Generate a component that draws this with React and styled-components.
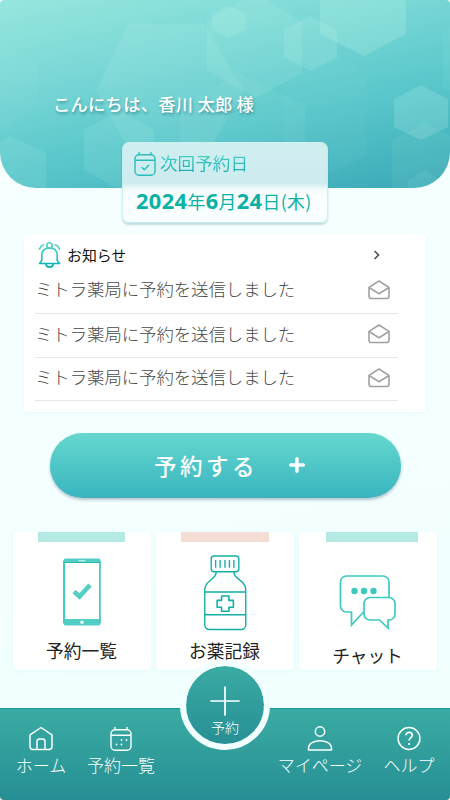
import styled, { createGlobalStyle } from "styled-components";

const GlobalStyle = createGlobalStyle`
  * {
    box-sizing: border-box;
  }

  body {
    margin: 0;
    background: #fff;
    font-family: "Noto Sans CJK JP", "Noto Sans", sans-serif;
  }
`;

const Screen = styled.div`
  display: flex;
  flex-direction: column;
  width: 450px;
  height: 800px;
  overflow: hidden;
  border-radius: 4px;
  background: linear-gradient(170deg, #f8ffff 0%, #f4ffff 55%, #effffe 100%);
`;

const Header = styled.header`
  position: relative;
  flex: none;
  height: 188px;
  padding: 92px 0 0 53px;
  overflow: hidden;
  border-radius: 0 0 36px 36px;
  background: linear-gradient(168deg, #97e6de 0%, #7bd8d6 30%, #58c6ca 63%, #3ba9b7 100%);
`;

const Hexagons = styled.svg`
  position: absolute;
  top: 0;
  left: 0;
`;

const Greeting = styled.h1`
  position: relative;
  margin: 0;
  font-size: 17.3px;
  font-weight: 500;
  line-height: 24px;
  letter-spacing: 0.25px;
  color: #fff;
  white-space: nowrap;
  text-shadow: 1px 2px 3px rgba(0, 70, 80, 0.4);
`;

const NextVisit = styled.section`
  position: relative;
  flex: none;
  width: 206px;
  height: 81px;
  margin: -46px 0 0 122px;
  padding: 8px 0 0 10px;
  border: 1px solid rgba(190, 235, 235, 0.75);
  border-radius: 7px;
  background: linear-gradient(
    #d0eff1 0,
    #cdebee 40px,
    #f1fbfc 46px,
    #fbfdff 52px,
    #f9ffff 100%
  );
  box-shadow: 0 2px 2px rgba(60, 120, 125, 0.28);
`;

const NextVisitTitle = styled.div`
  display: flex;
  align-items: center;
  gap: 3px;
  height: 25px;
  font-size: 17.6px;
  line-height: 24px;

  svg {
    margin-top: 1px;
  }
`;

const GradientText = styled.span`
  margin-bottom: 2px;
  font-weight: 400;
  color: transparent;
  background: linear-gradient(#49d0c5 15%, #1caeb2 85%);
  background-clip: text;
`;

const VisitDate = styled.div`
  margin: 12px 0 0 3px;
  font-size: 17.8px;
  line-height: 26px;
  letter-spacing: 0.4px;
  color: #08b2a5;
  white-space: nowrap;

  b {
    font-family: "Noto Sans", sans-serif;
    font-size: 21.8px;
    font-weight: 700;
  }
`;

const News = styled.section`
  flex: none;
  width: 402px;
  height: 178px;
  margin: 11px 0 0 24px;
  padding: 7px 28px 0 11px;
  border-radius: 4px;
  background: #fff;
  box-shadow: 0 1px 4px rgba(110, 210, 210, 0.1);
`;

const NewsHead = styled.div`
  display: flex;
  align-items: center;
  height: 28px;
  padding: 0 17px 0 3px;
  font-size: 14.9px;
  color: #111;

  svg:last-child {
    margin-left: auto;
  }

  span {
    margin: 0 0 2px 5px;
  }
`;

const NewsRow = styled.div`
  display: flex;
  align-items: center;
  justify-content: space-between;
  height: ${({ $height }) => $height}px;
  padding: 0 8px 3px 0;
  border-bottom: 1px solid #e7e7e7;
  font-size: 17.35px;
  font-weight: 300;
  color: #484848;
  white-space: nowrap;

  span {
    margin-bottom: 2px;
  }
`;

const ReserveButton = styled.button`
  display: flex;
  flex: none;
  align-items: center;
  width: 351px;
  height: 65px;
  margin: 21px 0 0 50px;
  padding: 0 0 0 104px;
  border: 0;
  border-bottom: 1px solid #4daabd;
  border-radius: 33px;
  background: linear-gradient(#66d7ce, #38b6c0);
  box-shadow: 0 2px 3px rgba(50, 90, 105, 0.34);
  color: #fff;
  font-family: inherit;
  font-size: 22.5px;
  font-weight: 500;
  letter-spacing: 3.5px;

  span {
    margin-bottom: 1px;
  }

  svg {
    margin-left: 30px;
  }
`;

const Menu = styled.div`
  display: flex;
  flex: none;
  gap: 5px;
  margin: 34px 0 0 13px;
`;

const MenuCard = styled.div`
  display: flex;
  flex-direction: column;
  align-items: center;
  justify-content: flex-end;
  gap: ${({ $gap }) => $gap}px;
  width: 138px;
  height: 138px;
  padding: 0 1px ${({ $bottom }) => $bottom}px 0;
  border-radius: 4px;
  background: linear-gradient(${({ $accent }) => $accent}, ${({ $accent }) => $accent})
      ${({ $barLeft }) => $barLeft}px 0 / ${({ $barWidth }) => $barWidth}px 10px no-repeat,
    #fff;
  box-shadow: 0 1px 4px rgba(110, 210, 210, 0.12);
  font-size: 17.7px;
  line-height: 24px;
  color: #222;
  white-space: nowrap;
`;

const Nav = styled.nav`
  position: relative;
  display: flex;
  flex: none;
  height: 92px;
  margin-top: 38px;
  padding-top: 17px;
  border-top: 1px solid #139d94;
  background: linear-gradient(#3aaba3, #278f94);
`;

const NavItem = styled.div`
  display: flex;
  flex-direction: column;
  align-items: center;
  width: ${({ $width }) => $width}px;
  margin-left: ${({ $left }) => $left || 0}px;
  color: #f8fffe;
  font-size: 17px;
  font-weight: 300;
  line-height: 24px;
  white-space: nowrap;

  svg {
    margin-bottom: 1px;
  }
`;

const AddButton = styled.div`
  position: absolute;
  top: -49px;
  left: 180px;
  display: flex;
  flex-direction: column;
  align-items: center;
  width: 90px;
  height: 90px;
  padding-top: 20px;
  border: 6px solid #f2ffff;
  border-radius: 50%;
  background: linear-gradient(#3aaba3, #278f94) padding-box;
  color: #fff;
  font-size: 14px;
  font-weight: 300;
  line-height: 23px;
`;

const HEXES = [
  { points: "128,24 204,24 244,91 204,158 134,158 96,91", opacity: 0.1 },
  { points: "84,130 119,110 154,130 154,170 119,190 84,170", opacity: 0.1 },
  { points: "-40,162 10,136 46,153 46,200 -40,200", opacity: 0.1 },
  { points: "212,14 228,5 246,14 246,30 229,38 212,29", opacity: 0.14 },
  { points: "207,20 255,-7 302,22 302,73 256,98 207,70", opacity: 0.11 },
  { points: "284,29 310,16 337,30 337,57 311,71 284,57", opacity: 0.13 },
  { points: "320,-25 363,-40 406,-25 406,34 364,56 320,34", opacity: 0.18 },
  { points: "394,99 421,85 448,99 448,127 421,140 394,127", opacity: 0.17 },
  { points: "180,109 238,73 305,105 305,210 180,210", opacity: 0.06 },
  { points: "392,140 424,123 460,141 460,190 392,190", opacity: 0.06 },
  { points: "408,181 425,170 442,181 442,202 408,202", opacity: 0.08 },
  { points: "283,80 330,51 367,72 367,155 320,180 283,155", opacity: 0.03 },
  { points: "443,33 480,10 480,90 443,90", opacity: 0.06 },
  { points: "-30,65 0,40 38,65 38,105 0,135 -30,110", opacity: 0.03 },
];

const HexagonPattern = () => (
  <Hexagons width="450" height="188">
    {HEXES.map(({ points, opacity }) => (
      <polygon key={points} points={points} fill="#d5fff1" opacity={opacity} />
    ))}
  </Hexagons>
);

const CalendarIcon = ({ check, ...props }) => (
  <svg width="24" height="26" viewBox="0 0 24 26" fill="none" strokeWidth="1.4" strokeLinecap="round" strokeLinejoin="round" {...props}>
    <path d="M6 3.7h12a4 4 0 0 1 4 4v12.500a4 4 0 0 1-4 4H6a4 4 0 0 1-4-4V7.700a4 4 0 0 1 4-4ZM2 9.200h20M6 3.700V1.500M18 3.700V1.500" />
    {check ? (
      <path d="m9 16.500 2.300 2.300 4.500-4.500" />
    ) : (
      <path strokeWidth="1.8" d="M7.500 18.500h.01M12.500 14h.01M17.500 14h.01M12.500 18.500h.01" />
    )}
  </svg>
);

const BellIcon = () => (
  <svg width="24" height="28" viewBox="0 0 24 28" fill="none" stroke="url(#bell)" strokeWidth="1.6" strokeLinecap="round">
    <defs>
      <linearGradient id="bell" gradientUnits="userSpaceOnUse" x1="0" y1="1" x2="0" y2="27">
        <stop stopColor="#55d8ca" />
        <stop offset="1" stopColor="#00aeb0" />
      </linearGradient>
    </defs>
    <circle cx="11.5" cy="4.5" r="2.7" />
    <path d="M3.800 19.500V14.500c0-5 3-7.500 7.700-7.500s7.700 2.500 7.700 7.500v5l2.300 3h-20Z" strokeLinejoin="round" />
    <path d="M8 22.800c.4 4.200 6.800 4.200 7.200 0M1.500 8c.7-2 2-3.400 4-4.300M21.500 8c-.7-2-2-3.400-4-4.300" />
  </svg>
);

const MailIcon = () => (
  <svg width="22" height="20" viewBox="0 0 22 20" fill="none" stroke="#a1a1a1" strokeWidth="1.6" strokeLinejoin="round">
    <path d="M1 7.400 11 1l10 6.400v8.800a2.300 2.300 0 0 1-2.300 2.300H3.300A2.300 2.300 0 0 1 1 16.200Z" />
    <path d="m1 7.500 10 6.200 10-6.200" />
  </svg>
);

const PhoneIcon = () => (
  <svg width="38" height="68" viewBox="0 0 38 68">
    <rect x=".5" y=".5" width="37" height="67" rx="2" fill="#52cec5" />
    <rect x="2.200" y="4.500" width="34" height="56.500" fill="#fff" />
    <path d="M.8 3v62M37 3v62M2 4.500h34" stroke="#25bdb3" fill="none" />
    <rect x="15.500" y="2" width="7" height="1.400" fill="#b8eae6" />
    <circle cx="19" cy="64.300" r="1.700" fill="#fff" />
    <path d="m11 33.500 5.500 5 10.500-11.500" fill="none" stroke="#52cec5" strokeWidth="4.600" />
  </svg>
);

const BottleIcon = () => (
  <svg width="44" height="76" viewBox="0 0 44 77" fill="none" stroke="#12afa5" strokeWidth="1.400" strokeLinejoin="round">
    <rect x="8" y="1" width="28" height="16" rx="3" />
    <path d="M12.500 5v8M17 5v8M22 5v8M26.500 5v8M31 5v8" />
    <path d="M13 17c1 8-11.500 8-11.500 18v36a4.500 4.500 0 0 0 4.500 4.500h32.500A4.500 4.500 0 0 0 43 71V35c0-10-12.500-10-12-18M1.500 37.500H43M1.500 60.500H43" />
    <path d="M18.500 41.500h7.500v4.500h4.500v7H26V57h-7.500v-4H14v-7h4.500Z" strokeWidth="1.600" />
  </svg>
);

const ChatIcon = () => (
  <svg width="58" height="56" viewBox="0 0 58 56" fill="none" stroke="#3bcac0" strokeWidth="1.700">
    <path d="M25 37.500 12.500 51V38H7.500A6 6 0 0 1 1.500 32V8a6 6 0 0 1 6-6H44a6 6 0 0 1 6 6v15" />
    <path d="M31 23.500h19a6 6 0 0 1 6 6v10.500a6 6 0 0 1-6 6h-1v8l-8.500-8H31a6 6 0 0 1-6-6V29.500a6 6 0 0 1 6-6Z" />
    <g fill="#3bcac0" stroke="none">
      <circle cx="15.500" cy="17" r="3.200" />
      <circle cx="25" cy="17" r="3.200" />
      <circle cx="34.500" cy="17" r="3.200" />
    </g>
  </svg>
);

const navIcon = { width: 26, height: 26, viewBox: "0 0 26 26", fill: "none", stroke: "currentColor", strokeWidth: 1.5 };

const HomeIcon = () => (
  <svg {...navIcon} strokeLinejoin="round">
    <path d="M2 8.800 13 1.500l11 7.300V20.500a3 3 0 0 1-3 3H5a3 3 0 0 1-3-3Z" />
    <path d="M9 23.500v-8a2.500 2.500 0 0 1 2.500-2.500h3a2.500 2.500 0 0 1 2.500 2.500v8" />
  </svg>
);

const UserIcon = () => (
  <svg {...navIcon}>
    <circle cx="13" cy="5.500" r="4.700" />
    <path d="M1.500 24v-1.500c0-10.500 23-10.500 23 0V24Z" strokeLinejoin="round" />
  </svg>
);

const HelpIcon = () => (
  <svg {...navIcon}>
    <circle cx="13" cy="12.500" r="10.900" />
    <path d="M10 9.300c0-4 6.300-4 6.300 0 0 2.500-3.200 2.400-3.200 5.200M13.100 17v2" strokeWidth="1.700" />
  </svg>
);

export default function App() {
  return (
    <>
      <GlobalStyle />
      <Screen>
        <Header>
          <HexagonPattern />
          <Greeting>こんにちは、香川 太郎 様</Greeting>
        </Header>
        <NextVisit>
          <NextVisitTitle>
            <CalendarIcon check stroke="#2bbdb8" />
            <GradientText>次回予約日</GradientText>
          </NextVisitTitle>
          <VisitDate>
            <b>2024</b>年<b>6</b>月<b>24</b>日(木)
          </VisitDate>
        </NextVisit>
        <News>
          <NewsHead>
            <BellIcon />
            <span>お知らせ</span>
            <svg width="8" height="12" viewBox="0 0 8 12" fill="none" stroke="#555" strokeWidth="1.700">
              <path d="m1.500 2 4 4-4 4" />
            </svg>
          </NewsHead>
          {[45, 44, 43].map((height) => (
            <NewsRow key={height} $height={height}>
              <span>ミトラ薬局に予約を送信しました</span>
              <MailIcon />
            </NewsRow>
          ))}
        </News>
        <ReserveButton>
          <span>予約する</span>
          <svg width="18" height="18" viewBox="0 0 18 18" stroke="#fff" strokeWidth="3.400" strokeLinecap="round">
            <path d="M9 2.700v12.600M2.700 9h12.600" />
          </svg>
        </ReserveButton>
        <Menu>
          <MenuCard $accent="#b5e9e4" $barLeft={25} $barWidth={87} $bottom={8} $gap={12}>
            <PhoneIcon />
            予約一覧
          </MenuCard>
          <MenuCard $accent="#f4ddd5" $barLeft={25} $barWidth={88} $bottom={8} $gap={7}>
            <BottleIcon />
            お薬記録
          </MenuCard>
          <MenuCard $accent="#b5e9e4" $barLeft={27} $barWidth={92} $bottom={3} $gap={13}>
            <ChatIcon />
            チャット
          </MenuCard>
        </Menu>
        <Nav>
          <NavItem $width={70} $left={6}>
            <HomeIcon />
            ホーム
          </NavItem>
          <NavItem $width={80} $left={5}>
            <CalendarIcon stroke="currentColor" />
            予約一覧
          </NavItem>
          <NavItem $width={90} $left={114}>
            <UserIcon />
            マイページ
          </NavItem>
          <NavItem $width={70} $left={9}>
            <HelpIcon />
            ヘルプ
          </NavItem>
          <AddButton>
            <svg width="30" height="30" viewBox="0 0 30 30" stroke="#fff" strokeWidth="1.700" strokeLinecap="round">
              <path d="M15 1v28M1 15h28" />
            </svg>
            予約
          </AddButton>
        </Nav>
      </Screen>
    </>
  );
}
